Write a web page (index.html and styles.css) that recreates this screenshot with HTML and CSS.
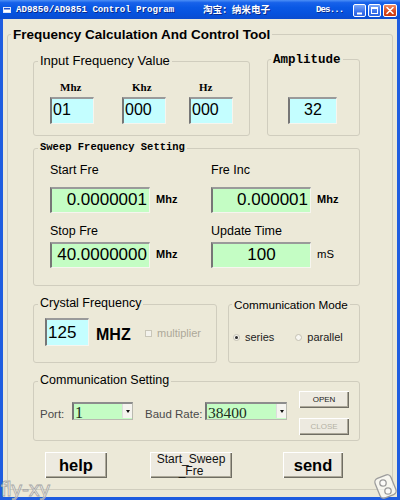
FILE: index.html
```html
<!DOCTYPE html>
<html>
<head>
<meta charset="utf-8">
<title>AD9850/AD9851 Control Program</title>
<link rel="stylesheet" href="styles.css">
</head>
<body>
<div class="window">
  <div class="titlebar">
    <svg class="app-icon" width="8" height="6" viewBox="0 0 8 6"><rect x="0.5" y="0.5" width="7" height="5" fill="#fff" stroke="#dfe6f8"/><rect x="1" y="1" width="6" height="1.5" fill="#1d4fcf"/></svg>
    <span class="t-main">AD9850/AD9851 Control Program</span>
    <span class="t-cn">淘宝：纳米电子</span>
    <span class="t-des">Des...</span>
    <div class="tb-btns">
      <span class="tb-btn"><svg width="11" height="11" viewBox="0 0 11 11"><rect x="3" y="7.5" width="5" height="2" fill="#fff"/></svg></span>
      <span class="tb-btn"><svg width="11" height="11" viewBox="0 0 11 11"><rect x="2.5" y="2.5" width="6" height="6" fill="none" stroke="#fff" stroke-width="1"/><rect x="2" y="2" width="7" height="2" fill="#fff"/></svg></span>
      <span class="tb-btn tb-close"><svg width="12" height="11" viewBox="0 0 12 11"><path d="M3 2.5 L9 8.5 M9 2.5 L3 8.5" stroke="#fff" stroke-width="1.6" stroke-linecap="round"/></svg></span>
    </div>
  </div>

  <div class="client">
    <div class="group main">
      <span class="legend legend-main">Frequency Calculation And Control Tool</span>

      <div class="row">
        <div class="group g-freq">
          <span class="legend legend-13">Input Frequency Value</span>
          <div class="freq-cols">
            <div class="freq-col"><div class="unit-lbl">Mhz</div><div class="field cyan freq-field">01</div></div>
            <div class="freq-col"><div class="unit-lbl">Khz</div><div class="field cyan freq-field">000</div></div>
            <div class="freq-col"><div class="unit-lbl">Hz</div><div class="field cyan freq-field">000</div></div>
          </div>
        </div>
        <div class="group g-amp">
          <span class="legend legend-mono-lg">Amplitude</span>
          <div class="field cyan amp-field">32</div>
        </div>
      </div>

      <div class="group g-sweep">
        <span class="legend legend-mono">Sweep Frequency Setting</span>
        <div class="sw-cell">
          <div class="sw-lbl">Start Fre</div>
          <div class="sw-row first"><div class="field green num">0.0000001</div><span class="unit">Mhz</span></div>
        </div>
        <div class="sw-cell">
          <div class="sw-lbl">Fre Inc</div>
          <div class="sw-row first"><div class="field green num">0.000001</div><span class="unit">Mhz</span></div>
        </div>
        <div class="sw-cell">
          <div class="sw-lbl">Stop Fre</div>
          <div class="sw-row second"><div class="field green num">40.0000000</div><span class="unit">Mhz</span></div>
        </div>
        <div class="sw-cell">
          <div class="sw-lbl">Update Time</div>
          <div class="sw-row second"><div class="field green num center">100</div><span class="unit ms">mS</span></div>
        </div>
      </div>

      <div class="row row3">
        <div class="group g-crystal">
          <span class="legend">Crystal Frequency</span>
          <div class="field cyan crys-field">125</div>
          <span class="mhz">MHZ</span>
          <span class="chk"></span>
          <span class="chk-lbl">multiplier</span>
        </div>
        <div class="group g-mode">
          <span class="legend legend-mode">Communication Mode</span>
          <div class="radios">
            <span class="radio"><span class="radio-dot on"></span>series</span>
            <span class="radio radio-2"><span class="radio-dot"></span>parallel</span>
          </div>
        </div>
      </div>

      <div class="group g-comm">
        <span class="legend">Communication Setting</span>
        <div class="comm-left">
          <span class="port-lbl">Port:</span>
          <div class="combo port"><span class="combo-val">1</span><span class="combo-btn"><span class="tri"></span></span></div>
          <span class="port-lbl baud-lbl">Baud Rate:</span>
          <div class="combo baud"><span class="combo-val">38400</span><span class="combo-btn"><span class="tri"></span></span></div>
        </div>
        <div class="comm-btns">
          <div class="btn btn-small">OPEN</div>
          <div class="btn btn-small disabled">CLOSE</div>
        </div>
      </div>

      <div class="btn-row">
        <div class="btn btn-big help">help</div>
        <div class="btn btn-big sweep">Start_Sweep<br>_Fre</div>
        <div class="btn btn-big send">send</div>
      </div>
    </div>
  </div>

  <span class="wm-text">fly-xy</span>
  <svg class="wm-icon" width="26" height="30" viewBox="0 0 26 30">
    <g fill="rgba(255,255,255,0.6)" stroke="#9c9c9c" stroke-width="1.3">
      <rect x="4" y="6" width="17" height="21" rx="4" transform="rotate(-22 12.5 16.5)"/>
      <circle cx="10" cy="13" r="3.2"/>
      <circle cx="15" cy="21" r="3.2"/>
    </g>
  </svg>
</div>
</body>
</html>
```

FILE: styles.css
```css
* { box-sizing: border-box; }
html, body { margin: 0; padding: 0; }
body {
  width: 400px;
  height: 500px;
  overflow: hidden;
  background: #ECE9D8;
  font-family: "Liberation Sans", Arial, sans-serif;
  color: #000;
}

.window {
  position: relative;
  width: 400px;
  height: 500px;
  display: flex;
  flex-direction: column;
  overflow: hidden;
}

/* ---------- title bar ---------- */
.titlebar {
  flex: none;
  height: 19px;
  display: flex;
  align-items: center;
  padding: 0 3px;
  background: linear-gradient(to bottom, #4d8ff6 0%, #1762ea 14%, #0a58e4 40%, #0652de 72%, #0b4ccf 100%);
  color: #fff;
  white-space: nowrap;
}
.app-icon { flex: none; margin-top: 1px; }
.t-main {
  width: 187px;
  margin-left: 5px;
  font: bold 9.1px/19px "Liberation Mono", monospace;
  text-shadow: 1px 1px 0 #0a2a8a;
}
.t-cn {
  width: 113px;
  font: bold 9.6px/19px "Noto Sans CJK SC", sans-serif;
  text-shadow: 1px 1px 0 #0a2a8a;
}
.t-des {
  flex: 1;
  font: bold 9.1px/19px "Liberation Mono", monospace;
  letter-spacing: -0.9px;
  text-shadow: 1px 1px 0 #0a2a8a;
}
.tb-btns { display: flex; gap: 2px; margin-top: 2px; }
.tb-btn {
  width: 13px;
  height: 13px;
  border: 1px solid #fff;
  border-radius: 2px;
  background: linear-gradient(to bottom, #7aa6f8, #3a72ec 60%, #2b62e0);
  display: flex;
}
.tb-close {
  width: 14px;
  background: linear-gradient(to bottom, #ef8a63, #d9491f 60%, #c8380f);
}

/* ---------- client area ---------- */
.client {
  flex: 1;
  border: 3px solid #1f5de0;
  border-top: 0;
  padding: 15px 0 0 4px;
  background: #ECE9D8;
}

.group {
  position: relative;
  border: 1px solid #D0CDBE;
  border-radius: 3px;
}
.legend {
  position: absolute;
  left: 4px;
  top: -9px;
  padding: 0 2px;
  background: #ECE9D8;
  font-size: 12.5px;
  line-height: 15px;
  white-space: nowrap;
}
.legend-main { left: 3px; top: -8px; font-weight: bold; font-size: 13.5px; line-height: 16px; }
.legend-13 { font-size: 13px; }
.legend-mono { top: -8px; font: bold 10.5px/13px "Liberation Mono", monospace; }
.legend-mono-lg { left: 3px; top: -7px; font: bold 12.5px/15px "Liberation Mono", monospace; }
.legend-mode { left: 3px; top: -8px; font-size: 11.7px; }

.main {
  width: 386px;
  height: 456px;
  padding: 24px 0 0 25px;
}
.row { display: flex; align-items: flex-start; }

/* fields */
.field {
  border-top: 2px solid #9a9a9a;
  border-left: 2px solid #767676;
  border-right: 1px solid #f6f5ef;
  border-bottom: 1px solid #f6f5ef;
  white-space: nowrap;
}
.cyan { background: #C4FEFF; }
.green { background: #C4FDC4; }

/* input frequency */
.g-freq {
  width: 217px;
  height: 75px;
  margin-top: 2px;
  padding: 19px 0 0 16px;
}
.freq-cols { display: grid; grid-template-columns: 72px 67px 44px; }
.unit-lbl {
  padding-left: 10px;
  margin-bottom: 3px;
  font: bold 11px/13px "Liberation Serif", serif;
}
.freq-field {
  width: 44px;
  height: 27px;
  padding-left: 1px;
  font-size: 16px;
  line-height: 22px;
}

/* amplitude */
.g-amp {
  width: 93px;
  height: 77px;
  margin-left: 17px;
  padding: 37px 0 0 20px;
}
.amp-field {
  width: 49px;
  height: 27px;
  text-align: center;
  font-size: 16px;
  line-height: 22px;
}

/* sweep */
.g-sweep {
  margin-top: 12px;
  width: 327px;
  height: 138px;
  padding: 14px 0 0 16px;
  display: grid;
  grid-template-columns: 161px 1fr;
  row-gap: 11px;
  align-content: start;
}
.sw-lbl { font-size: 12.5px; line-height: 15px; }
.sw-row { display: flex; align-items: flex-start; }
.sw-row.first { margin-top: 9px; }
.sw-row.second { margin-top: 3px; }
.num {
  width: 100px;
  height: 26px;
  padding-right: 2px;
  text-align: right;
  font-size: 17px;
  line-height: 21px;
}
.num.center { text-align: center; padding-right: 0; }
.unit {
  margin: 6px 0 0 6px;
  font-weight: bold;
  font-size: 11px;
  line-height: 13px;
}
.unit.ms { font-weight: normal; font-size: 11.3px; }

/* crystal */
.row3 { margin-top: 18px; }
.g-crystal {
  width: 184px;
  height: 59px;
  padding: 13px 0 0 11px;
  display: flex;
  align-items: flex-start;
}
.crys-field {
  width: 44px;
  height: 28px;
  padding-left: 1px;
  font-size: 17px;
  line-height: 25px;
}
.mhz {
  width: 49px;
  margin: 8px 0 0 7px;
  font-weight: bold;
  font-size: 16px;
  line-height: 18px;
}
.chk {
  width: 7px;
  height: 7px;
  margin-top: 12px;
  border: 1px solid #c9c6b8;
  background: #f3f2ec;
}
.chk-lbl {
  margin: 9px 0 0 5px;
  color: #aca899;
  font-size: 11px;
  line-height: 13px;
}

/* communication mode */
.g-mode {
  width: 132px;
  height: 59px;
  margin-left: 11px;
  padding: 26px 0 0 4px;
}
.radios { display: flex; align-items: center; height: 13px; }
.radio {
  display: flex;
  align-items: center;
  gap: 5px;
  font-size: 11px;
  line-height: 13px;
  color: #222;
}
.radio-2 { margin-left: 21px; }
.radio-dot {
  width: 7px;
  height: 7px;
  border-radius: 50%;
  border: 1px solid #c4c1b3;
  background: #f7f6f1;
  display: flex;
  align-items: center;
  justify-content: center;
}
.radio-dot.on::after {
  content: "";
  width: 3px;
  height: 3px;
  border-radius: 50%;
  background: #2b2b2b;
}

/* communication setting */
.g-comm {
  margin-top: 18px;
  width: 327px;
  height: 60px;
  padding: 0 10px 0 6px;
  display: flex;
  align-items: flex-start;
}
.comm-left { display: flex; align-items: flex-start; margin-top: 20px; }
.port-lbl {
  width: 32px;
  margin-top: 5px;
  font-size: 11.5px;
  line-height: 14px;
  color: #4a4a4a;
  white-space: nowrap;
}
.baud-lbl { width: 60px; margin-left: 12px; }
.combo {
  height: 18px;
  display: flex;
  align-items: flex-start;
  background: #C4FDC4;
  border: 1px solid #b9b9b0;
  border-top: 2px solid #8d8d8d;
  border-left: 2px solid #767676;
}
.combo.port { width: 61px; }
.combo.baud { width: 82px; }
.combo-val {
  flex: 1;
  padding-left: 1px;
  font: 16px/18px "Liberation Serif", serif;
  color: #1d2d1d;
  height: 15px;
  overflow: visible;
}
.combo.baud .combo-val { font-size: 15.5px; }
.combo-btn {
  width: 10px;
  height: 14px;
  margin-right: 0;
  background: #f5f4ef;
  border-left: 1px solid #ddd;
  display: flex;
  align-items: center;
  justify-content: center;
}
.tri {
  width: 0;
  height: 0;
  border-left: 2.5px solid transparent;
  border-right: 2.5px solid transparent;
  border-top: 3px solid #111;
}
.comm-btns {
  margin-left: auto;
  padding-top: 9px;
  display: flex;
  flex-direction: column;
  gap: 10px;
}

/* buttons */
.btn {
  background: #EDEAE0;
  box-shadow: inset 1px 1px 0 #ffffff, inset -1px -1px 0 #6f6d63, inset -2px -2px 0 #aca899;
  display: flex;
  align-items: center;
  justify-content: center;
  text-align: center;
}
.btn-small {
  width: 50px;
  height: 17px;
  font-size: 8px;
  line-height: 9px;
  color: #222;
}
.btn-small.disabled { color: #b4b1a4; }

.btn-row {
  margin-top: 11px;
  display: flex;
  padding-left: 12px;
}
.btn-big { height: 26px; }
.help { width: 62px; font-weight: bold; font-size: 16.5px; }
.sweep { width: 82px; margin-left: 43px; font-size: 12px; line-height: 12.5px; color: #111; }
.send { width: 60px; margin-left: 51px; font-weight: bold; font-size: 16.5px; }

/* watermarks overlaying the screenshot */
.wm-text {
  position: absolute;
  left: 1px;
  top: 478px;
  font-size: 21px;
  line-height: 21px;
  color: rgba(255, 255, 255, 0.55);
  -webkit-text-stroke: 0.8px #a6a6a6;
}
.wm-icon {
  position: absolute;
  left: 373px;
  top: 470px;
}
```
